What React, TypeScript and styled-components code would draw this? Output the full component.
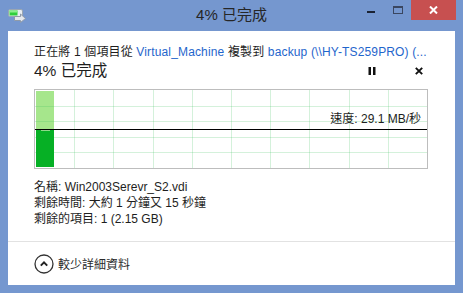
import React from 'react'
import styled, { createGlobalStyle } from 'styled-components'

const GlobalStyle = createGlobalStyle`
  html, body {
    margin: 0;
    padding: 0;
  }
  body {
    font-family: "Liberation Sans", "Noto Sans CJK TC", sans-serif;
    color: #1e1e1e;
  }
`

const Window = styled.div`
  width: 463px;
  height: 293px;
  background: #7597cf;
  display: flex;
  flex-direction: column;
  overflow: hidden;
`

const TitleBar = styled.div`
  height: 31px;
  flex: none;
  display: grid;
  grid-template-columns: 1fr auto 1fr;
`

const AppIcon = styled.div`
  padding: 9px 0 0 8px;
`

const Title = styled.div`
  font-size: 15px;
  line-height: 30px;
  color: #262626;
`

const Controls = styled.div`
  display: flex;
  justify-content: flex-end;
  align-items: flex-start;
  padding-right: 7px;
`

const CaptionButton = styled.div<{ $width: number; $close?: boolean }>`
  width: ${p => p.$width}px;
  height: 20px;
  display: flex;
  align-items: center;
  justify-content: center;
  background: ${p => (p.$close ? '#c75050' : 'transparent')};
`

const Panel = styled.div`
  flex: 1;
  margin: 0 8px 8px;
  background: #fff;
  display: flex;
  flex-direction: column;
`

const Body = styled.div`
  flex: 1;
  padding: 13px 28px 0 26px;
`

const FromTo = styled.div`
  font-size: 12px;
  line-height: 16px;
  white-space: nowrap;
  overflow: hidden;
  letter-spacing: 0.15px;
`

const Link = styled.span`
  color: #1f66cc;
`

const StatusRow = styled.div`
  margin-top: 1px;
  height: 20px;
  display: flex;
  align-items: center;
`

const Percent = styled.div`
  flex: 1;
  font-size: 15.5px;
  line-height: 20px;
`

const ActionButton = styled.div`
  width: 16px;
  height: 20px;
  display: flex;
  align-items: center;
  justify-content: center;
  & + & {
    margin-left: 31px;
  }
`

const Chart = styled.div`
  position: relative;
  margin-top: 8px;
  width: 394px;
  height: 80px;
  box-sizing: border-box;
  border: 1px solid #bdbdbd;
  background: #fff;
  svg {
    display: block;
  }
`

const Speed = styled.div`
  position: absolute;
  top: 22px;
  right: 6px;
  font-size: 12px;
  line-height: 14px;
  white-space: nowrap;
`

const Details = styled.div`
  margin-top: 10px;
  font-size: 12px;
  line-height: 16px;
`

const Footer = styled.div`
  height: 43px;
  flex: none;
  border-top: 1px solid #e2e2e2;
  padding-left: 26px;
  display: flex;
  align-items: center;
  gap: 4px;
  font-size: 12px;
  color: #2a2a2a;
`

const W = 392
const H = 78
const GRID = 'rgba(60,190,90,0.22)'

function SpeedGraph() {
  const cols = Array.from({ length: 9 }, (_, i) => Math.round((i + 1) * 39.2) + 0.5)
  const rows = Array.from({ length: 4 }, (_, i) => Math.round((i + 1) * 15.6) + 0.5)
  return (
    <svg width={W} height={H}>
      <rect x={1} y={1} width={18} height={38} fill="#a6e68c" />
      {cols.map(x => (
        <line key={'c' + x} x1={x} y1={0} x2={x} y2={H} stroke={GRID} strokeWidth={1} />
      ))}
      {rows.map(y => (
        <line key={'r' + y} x1={0} y1={y} x2={W} y2={y} stroke={GRID} strokeWidth={1} />
      ))}
      <rect x={1} y={40} width={18} height={37} fill="#06b025" />
      <rect x={6} y={40} width={9} height={1} fill="#8fd88a" />
      <rect x={0} y={39} width={W} height={1} fill="#000" />
    </svg>
  )
}

export default function App() {
  return (
    <>
      <GlobalStyle />
      <Window>
        <TitleBar>
          <AppIcon>
            <svg width="19" height="14" viewBox="0 0 19 14">
              <rect x="0.5" y="0.5" width="14" height="7" rx="1.5" fill="#e9eef2" stroke="#9aa6b2" />
              <rect x="1.5" y="1.5" width="8" height="5" fill="#2fcf3c" />
              <rect x="1.5" y="1.5" width="8" height="2" fill="#8cf08c" />
              <path d="M6.5 7.5 H12.5 V5 L17.5 9.5 L12.5 13.5 V11.5 H6.5 Z" fill="#e4e8ee" stroke="#8f9aa8" />
            </svg>
          </AppIcon>
          <Title>4% 已完成</Title>
          <Controls>
            <CaptionButton $width={26}>
              <svg width="8" height="8" viewBox="0 0 8 8">
                <rect x="0" y="5" width="8" height="2" fill="#1a2233" />
              </svg>
            </CaptionButton>
            <CaptionButton $width={27}>
              <svg width="10" height="8" viewBox="0 0 10 8">
                <rect x="0.5" y="0.5" width="9" height="7" fill="none" stroke="#3a4660" />
                <rect x="0" y="0" width="10" height="2" fill="#3a4660" />
              </svg>
            </CaptionButton>
            <CaptionButton $width={45} $close>
              <svg width="9" height="8" viewBox="0 0 9 8">
                <path d="M1 0.5 L8 7.5 M8 0.5 L1 7.5" stroke="#fff" strokeWidth="2" />
              </svg>
            </CaptionButton>
          </Controls>
        </TitleBar>
        <Panel>
          <Body>
            <FromTo>
              正在將 1 個項目從 <Link>Virtual_Machine</Link> 複製到 <Link>backup (\\HY-TS259PRO) (...</Link>
            </FromTo>
            <StatusRow>
              <Percent>4% 已完成</Percent>
              <ActionButton>
                <svg width="8" height="8" viewBox="0 0 8 8">
                  <rect x="0.5" y="0" width="2.5" height="8" fill="#111" />
                  <rect x="5" y="0" width="2.5" height="8" fill="#111" />
                </svg>
              </ActionButton>
              <ActionButton>
                <svg width="8" height="8" viewBox="0 0 8 8">
                  <path d="M0.8 0.8 L7.2 7.2 M7.2 0.8 L0.8 7.2" stroke="#111" strokeWidth="1.9" />
                </svg>
              </ActionButton>
            </StatusRow>
            <Chart>
              <SpeedGraph />
              <Speed>速度: 29.1 MB/秒</Speed>
            </Chart>
            <Details>
              <div>名稱: Win2003Serevr_S2.vdi</div>
              <div>剩餘時間: 大約 1 分鐘又 15 秒鐘</div>
              <div>剩餘的項目: 1 (2.15 GB)</div>
            </Details>
          </Body>
          <Footer>
            <svg width="20" height="20" viewBox="0 0 20 20">
              <circle cx="10" cy="10" r="9" fill="none" stroke="#333" strokeWidth="1.3" />
              <path d="M6.8 11.6 L10 8.4 L13.2 11.6" fill="none" stroke="#222" strokeWidth="2" />
            </svg>
            <span>較少詳細資料</span>
          </Footer>
        </Panel>
      </Window>
    </>
  )
}
